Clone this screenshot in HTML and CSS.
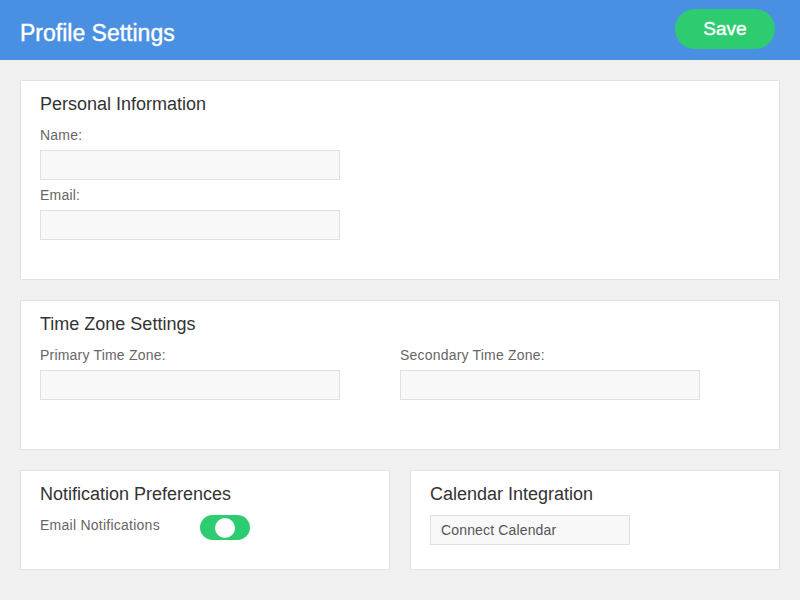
FILE: index.html
```html
<!DOCTYPE html>
<html lang="en">
<head>
<meta charset="utf-8">
<title>Profile Settings</title>
<link rel="stylesheet" href="styles.css">
</head>
<body>
<header class="topbar">
  <h1 class="topbar-title">Profile Settings</h1>
  <button class="save-btn" type="button">Save</button>
</header>
<main class="content">
  <section class="card card-personal">
    <h2 class="card-title">Personal Information</h2>
    <div class="field">
      <label class="field-label" for="name">Name:</label>
      <input class="text-input" id="name" type="text">
    </div>
    <div class="field">
      <label class="field-label" for="email">Email:</label>
      <input class="text-input" id="email" type="email">
    </div>
  </section>
  <section class="card card-timezone">
    <h2 class="card-title">Time Zone Settings</h2>
    <div class="tz-grid">
      <div class="field">
        <label class="field-label" for="tz1">Primary Time Zone:</label>
        <input class="text-input" id="tz1" type="text">
      </div>
      <div class="field">
        <label class="field-label" for="tz2">Secondary Time Zone:</label>
        <input class="text-input" id="tz2" type="text">
      </div>
    </div>
  </section>
  <div class="bottom-row">
    <section class="card card-small">
      <h2 class="card-title card-title-tight">Notification Preferences</h2>
      <div class="toggle-row">
        <span class="toggle-label">Email Notifications</span>
        <span class="toggle" role="switch" aria-checked="true"><span class="toggle-knob"></span></span>
      </div>
    </section>
    <section class="card card-small">
      <h2 class="card-title card-title-tight">Calendar Integration</h2>
      <button class="connect-btn" type="button">Connect Calendar</button>
    </section>
  </div>
</main>
</body>
</html>
```
FILE: styles.css
```css
* { box-sizing: border-box; }

html, body {
  margin: 0;
  padding: 0;
}

body {
  background: #f0f0f0;
  font-family: "Liberation Sans", Arial, Helvetica, sans-serif;
  color: #333;
  width: 800px;
  height: 600px;
  overflow: hidden;
}

.topbar {
  height: 60px;
  background: #4a90e2;
  display: flex;
  align-items: center;
  justify-content: space-between;
  padding: 0 25px 0 20px;
}

.topbar-title {
  margin: 5px 0 0 0;
  font-size: 23px;
  line-height: 28px;
  font-weight: normal;
  color: #fff;
  -webkit-text-stroke: 0.4px #fff;
}

.save-btn {
  width: 100px;
  height: 40px;
  margin-bottom: 2px;
  border: none;
  border-radius: 20px;
  background: #2ecc71;
  color: #fff;
  font-family: inherit;
  font-size: 19px;
  font-weight: normal;
  -webkit-text-stroke: 0.4px #fff;
  padding: 0;
}

.content {
  padding: 20px;
  display: flex;
  flex-direction: column;
  gap: 20px;
}

.card {
  background: #fff;
  border: 1px solid #e2e2e2;
  padding: 13px 19px 0 19px;
}

.card-personal { height: 200px; }
.card-timezone { height: 150px; }
.card-small { height: 100px; }

.card-title {
  margin: 0 0 13px 0;
  font-size: 18px;
  line-height: 20px;
  font-weight: normal;
  color: #333;
}

.card-title-tight { margin-bottom: 11px; }

.field { margin-bottom: 7px; }

.field-label {
  display: block;
  font-size: 14px;
  line-height: 16px;
  letter-spacing: 0.2px;
  color: #666;
  margin-bottom: 7px;
}

.text-input {
  display: block;
  width: 300px;
  height: 30px;
  margin: 0;
  background: #f8f8f8;
  border: 1px solid #e0e0e0;
  border-radius: 0;
  outline: none;
}

.tz-grid {
  display: grid;
  grid-template-columns: 1fr 1fr;
}

.bottom-row {
  display: grid;
  grid-template-columns: 1fr 1fr;
  gap: 20px;
}

.toggle-row {
  display: flex;
  align-items: flex-start;
}

.toggle-label {
  width: 160px;
  margin-top: 2px;
  font-size: 14px;
  line-height: 16px;
  letter-spacing: 0.25px;
  color: #666;
}

.toggle {
  width: 50px;
  height: 25px;
  border-radius: 12.5px;
  background: #2ecc71;
  display: flex;
  align-items: center;
  justify-content: center;
}

.toggle-knob {
  width: 20px;
  height: 20px;
  border-radius: 50%;
  background: #fff;
}

.connect-btn {
  display: block;
  width: 200px;
  height: 30px;
  margin: 0;
  padding: 0 10px;
  text-align: left;
  background: #f8f8f8;
  border: 1px solid #e0e0e0;
  border-radius: 0;
  font-family: inherit;
  font-size: 14px;
  letter-spacing: 0.15px;
  color: #555;
}
```
